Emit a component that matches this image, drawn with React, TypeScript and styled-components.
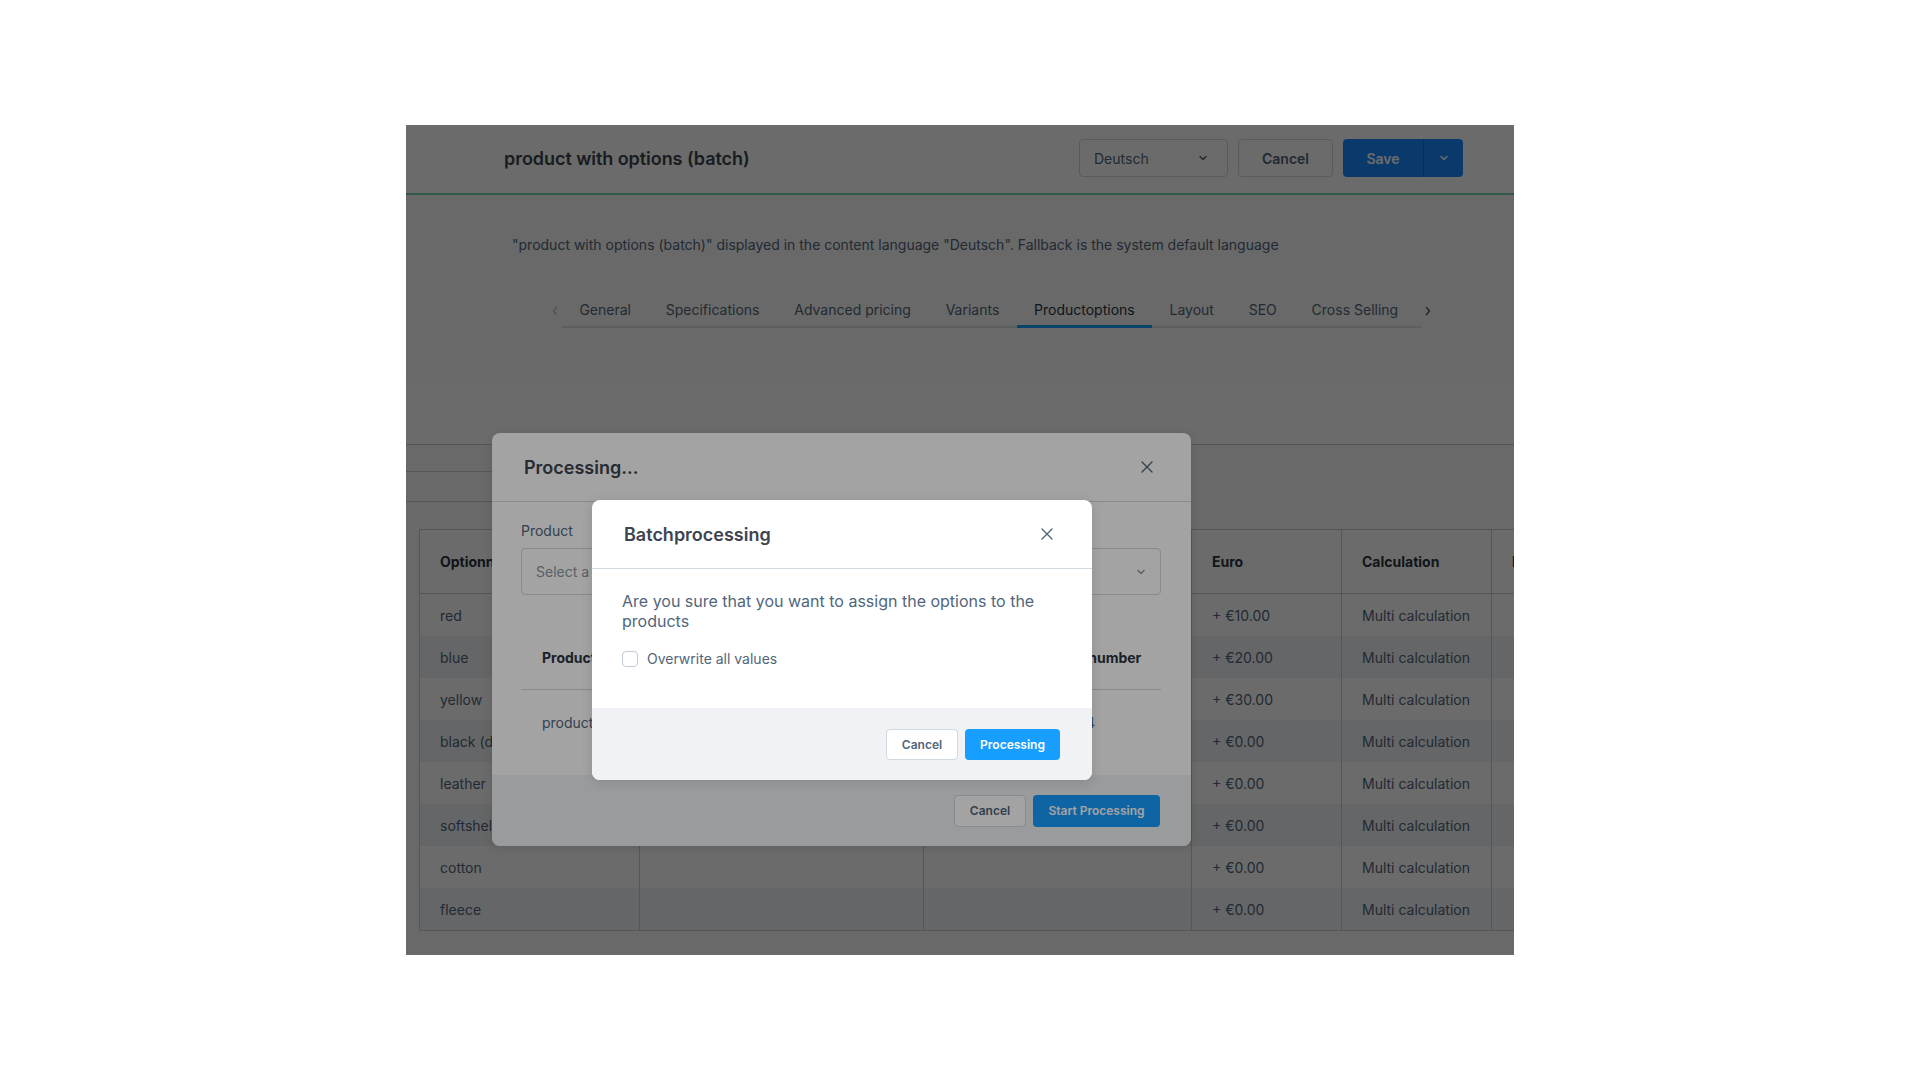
import React from "react";
import styled, { createGlobalStyle } from "styled-components";

const Global = createGlobalStyle`
  html, body { margin: 0; padding: 0; background: #ffffff; }
  body { font-family: Inter, "Noto Sans", "Liberation Sans", sans-serif; -webkit-font-smoothing: antialiased; }
  * { box-sizing: border-box; }
`;

const Page = styled.div`
  width: 1920px;
  height: 1080px;
  display: flex;
  align-items: center;
  justify-content: center;
  background: #ffffff;
`;

const Frame = styled.div`
  position: relative;
  width: 1108px;
  height: 830px;
  overflow: hidden;
  background: #fafbfb;
  display: flex;
  flex-direction: column;
`;

const Header = styled.header`
  height: 70px;
  flex: none;
  display: flex;
  align-items: center;
  padding: 0 51px 2px 98px;
  border-bottom: 2px solid #6fd8a4;
  background: #ffffff;
`;

const Title = styled.h1`
  margin: 0;
  flex: 1;
  font-size: 18px;
  font-weight: 600;
  color: #3d4450;
  letter-spacing: -0.05px;
`;

const HeaderActions = styled.div`
  display: flex;
  align-items: center;
  gap: 10px;
`;

const LangSelect = styled.div`
  width: 149px;
  height: 38px;
  border: 1px solid #d1d9e0;
  border-radius: 4px;
  display: flex;
  align-items: center;
  justify-content: space-between;
  padding: 0 19px 0 14px;
  font-size: 14px;
  color: #52667a;
  background: #ffffff;
`;

const GhostButton = styled.button<{ $w: number; $h: number; $fs: number }>`
  width: ${(p) => p.$w}px;
  height: ${(p) => p.$h}px;
  border: 1px solid #d1d9e0;
  border-radius: 4px;
  background: #ffffff;
  color: #52667a;
  font-family: inherit;
  font-size: ${(p) => p.$fs}px;
  font-weight: 600;
  padding: 0;
  display: flex;
  align-items: center;
  justify-content: center;
`;

const PrimaryButton = styled.button<{ $w: number; $h: number; $fs: number; $bg: string }>`
  width: ${(p) => p.$w}px;
  height: ${(p) => p.$h}px;
  border: none;
  border-radius: 4px;
  background: ${(p) => p.$bg};
  color: #ffffff;
  font-family: inherit;
  font-size: ${(p) => p.$fs}px;
  font-weight: 600;
  padding: 0;
  display: flex;
  align-items: center;
  justify-content: center;
`;

const SplitButton = styled.div`
  display: flex;
  height: 38px;
  border-radius: 4px;
  overflow: hidden;
  background: #1a8cff;
`;

const SplitMain = styled.div`
  width: 81px;
  display: flex;
  align-items: center;
  justify-content: center;
  color: #ffffff;
  font-size: 14px;
  font-weight: 600;
  border-right: 1px solid #1472d6;
`;

const SplitToggle = styled.div`
  width: 39px;
  display: flex;
  align-items: center;
  justify-content: center;
  color: #ffffff;
`;

const Content = styled.div`
  flex: 1;
  display: flex;
  flex-direction: column;
`;

const LangNote = styled.p`
  margin: 0;
  padding: 41px 0 0 106px;
  height: 99px;
  font-size: 14px;
  color: #52667a;
  line-height: 18px;
`;

const TabsRow = styled.div`
  display: flex;
  align-items: flex-start;
  padding-left: 142px;
  height: 89px;
`;

const TabArrow = styled.div<{ $dim?: boolean }>`
  width: 14px;
  height: 34px;
  display: flex;
  align-items: center;
  justify-content: center;
  color: ${(p) => (p.$dim ? "#b8c2cc" : "#52667a")};
`;

const TabList = styled.div`
  display: flex;
  border-bottom: 2px solid #dde3ea;
  width: 859px;
`;

const Tab = styled.div<{ $active?: boolean }>`
  height: 34px;
  padding: 0 17.4px;
  margin-bottom: -2px;
  display: flex;
  align-items: center;
  font-size: 14px;
  color: ${(p) => (p.$active ? "#2c3440" : "#52667a")};
  border-bottom: 3px solid ${(p) => (p.$active ? "#189eff" : "transparent")};
  white-space: nowrap;
`;

const Band = styled.div`
  height: 62px;
  background: #ffffff;
  border-bottom: 1px solid #c9d1d8;
`;

const ToolbarArea = styled.div`
  height: 84px;
  display: flex;
  flex-direction: column;
`;

const ToolLine = styled.div<{ $h: number }>`
  width: 200px;
  height: ${(p) => p.$h}px;
  border-bottom: 1px solid #c9d1d8;
`;

const Table = styled.div`
  margin-left: 13px;
  display: grid;
  grid-template-columns: 220px 284px 268px 150px 150px 150px;
  border-top: 1px solid #c9d1d8;
  border-left: 1px solid #c9d1d8;
  border-bottom: 1px solid #c9d1d8;
`;

const HeadCell = styled.div`
  height: 64px;
  display: flex;
  align-items: center;
  padding-left: 20px;
  font-size: 14px;
  font-weight: 700;
  color: #2c3440;
  border-right: 1px solid #c9d1d8;
  border-bottom: 1px solid #c9d1d8;
  background: #ffffff;
  white-space: nowrap;
  overflow: hidden;
`;

const Cell = styled.div<{ $striped: boolean }>`
  height: 42px;
  display: flex;
  align-items: center;
  padding-left: 20px;
  font-size: 14px;
  color: #52667a;
  border-right: 1px solid #c9d1d8;
  background: ${(p) => (p.$striped ? "#f1f3f5" : "#ffffff")};
  white-space: nowrap;
  overflow: hidden;
`;

const Backdrop = styled.div<{ $a: number }>`
  position: absolute;
  inset: 0;
  background: rgba(0, 0, 0, ${(p) => p.$a});
`;

const Modal = styled.div<{ $left: number; $top: number; $w: number; $h: number }>`
  position: absolute;
  left: ${(p) => p.$left}px;
  top: ${(p) => p.$top}px;
  width: ${(p) => p.$w}px;
  height: ${(p) => p.$h}px;
  background: #ffffff;
  border-radius: 8px;
  overflow: hidden;
  display: flex;
  flex-direction: column;
  box-shadow: 0 2px 12px rgba(0, 0, 0, 0.12);
`;

const ModalHeader = styled.div<{ $pl: number; $pr: number }>`
  height: 69px;
  flex: none;
  display: flex;
  align-items: center;
  justify-content: space-between;
  padding: 0 ${(p) => p.$pr}px 0 ${(p) => p.$pl}px;
  border-bottom: 1px solid #d1d9e0;
`;

const ModalTitle = styled.h2`
  margin: 0;
  font-size: 18px;
  font-weight: 600;
  color: #3d4450;
`;

const CloseBtn = styled.div`
  width: 14px;
  height: 14px;
  display: flex;
  align-items: center;
  justify-content: center;
  color: #52667a;
`;

const ModalBody = styled.div<{ $pad: string }>`
  flex: 1;
  padding: ${(p) => p.$pad};
  display: flex;
  flex-direction: column;
`;

const ModalFooter = styled.div<{ $h: number; $pr: number }>`
  height: ${(p) => p.$h}px;
  flex: none;
  background: #f0f2f5;
  display: flex;
  align-items: center;
  justify-content: flex-end;
  gap: 7px;
  padding-right: ${(p) => p.$pr}px;
`;

const FieldLabel = styled.div`
  font-size: 14px;
  color: #52667a;
  line-height: 18px;
  margin-bottom: 8px;
`;

const SelectBox = styled.div`
  height: 47px;
  border: 1px solid #d1d9e0;
  border-radius: 4px;
  display: flex;
  align-items: center;
  justify-content: space-between;
  padding: 0 14px 0 14px;
  font-size: 14px;
  color: #8a97a5;
`;

const InnerTable = styled.div`
  margin-top: 30px;
  display: flex;
  flex-direction: column;
`;

const InnerRow = styled.div<{ $head?: boolean }>`
  height: ${(p) => (p.$head ? "65px" : "64px")};
  display: grid;
  grid-template-columns: 489px 1fr;
  align-items: center;
  padding: 0 0 0 21px;
  font-size: 14px;
  font-weight: ${(p) => (p.$head ? 700 : 400)};
  color: ${(p) => (p.$head ? "#2c3440" : "#52667a")};
  border-bottom: ${(p) => (p.$head ? "1px solid #d1d9e0" : "none")};
  white-space: nowrap;
`;

const Question = styled.p`
  margin: 0;
  font-size: 16px;
  line-height: 20px;
  color: #52667a;
`;

const CheckRow = styled.label`
  margin-top: 19px;
  display: flex;
  align-items: center;
  gap: 9px;
  font-size: 14px;
  color: #52667a;
`;

const CheckBox = styled.span`
  width: 16px;
  height: 16px;
  border: 1px solid #c3ccd5;
  border-radius: 4px;
  background: #ffffff;
`;

const Chevron = ({ size = 10 }: { size?: number }) => (
  <svg width={size} height={size} viewBox="0 0 10 10" fill="none">
    <path d="M2 3.5L5 6.5L8 3.5" stroke="currentColor" strokeWidth="1.5" strokeLinecap="round" strokeLinejoin="round" />
  </svg>
);

const XIcon = () => (
  <svg width="12" height="12" viewBox="0 0 12 12" fill="none">
    <path d="M1 1L11 11M11 1L1 11" stroke="currentColor" strokeWidth="1.4" strokeLinecap="round" />
  </svg>
);

const ArrowL = () => (
  <svg width="8" height="10" viewBox="0 0 8 10" fill="none">
    <path d="M5.5 1.5L2.5 5L5.5 8.5" stroke="currentColor" strokeWidth="1.3" strokeLinecap="round" strokeLinejoin="round" />
  </svg>
);

const ArrowR = () => (
  <svg width="8" height="10" viewBox="0 0 8 10" fill="none">
    <path d="M2.5 1.5L5.5 5L2.5 8.5" stroke="currentColor" strokeWidth="1.6" strokeLinecap="round" strokeLinejoin="round" />
  </svg>
);

const tabs = ["General", "Specifications", "Advanced pricing", "Variants", "Productoptions", "Layout", "SEO", "Cross Selling"];

const rows = [
  { name: "red", euro: "+ €10.00" },
  { name: "blue", euro: "+ €20.00" },
  { name: "yellow", euro: "+ €30.00" },
  { name: "black (dark)", euro: "+ €0.00" },
  { name: "leather", euro: "+ €0.00" },
  { name: "softshell", euro: "+ €0.00" },
  { name: "cotton", euro: "+ €0.00" },
  { name: "fleece", euro: "+ €0.00" },
];

export default function App() {
  return (
    <>
      <Global />
      <Page>
        <Frame>
          <Header>
            <Title>product with options (batch)</Title>
            <HeaderActions>
              <LangSelect>
                <span>Deutsch</span>
                <Chevron />
              </LangSelect>
              <GhostButton $w={95} $h={38} $fs={14}>Cancel</GhostButton>
              <SplitButton>
                <SplitMain>Save</SplitMain>
                <SplitToggle>
                  <Chevron />
                </SplitToggle>
              </SplitButton>
            </HeaderActions>
          </Header>
          <Content>
            <LangNote>
              "product with options (batch)" displayed in the content language "Deutsch". Fallback is the system default language
            </LangNote>
            <TabsRow>
              <TabArrow $dim>
                <ArrowL />
              </TabArrow>
              <TabList>
                {tabs.map((t) => (
                  <Tab key={t} $active={t === "Productoptions"}>
                    {t}
                  </Tab>
                ))}
              </TabList>
              <TabArrow>
                <ArrowR />
              </TabArrow>
            </TabsRow>
            <Band />
            <ToolbarArea>
              <ToolLine $h={27} />
              <ToolLine $h={30} />
            </ToolbarArea>
            <Table>
              <HeadCell>Optionname</HeadCell>
              <HeadCell>Product number</HeadCell>
              <HeadCell>Surcharge</HeadCell>
              <HeadCell>Euro</HeadCell>
              <HeadCell>Calculation</HeadCell>
              <HeadCell>Position</HeadCell>
              {rows.map((r, i) => (
                <React.Fragment key={r.name}>
                  <Cell $striped={i % 2 === 1}>{r.name}</Cell>
                  <Cell $striped={i % 2 === 1} />
                  <Cell $striped={i % 2 === 1} />
                  <Cell $striped={i % 2 === 1}>{r.euro}</Cell>
                  <Cell $striped={i % 2 === 1}>Multi calculation</Cell>
                  <Cell $striped={i % 2 === 1} />
                </React.Fragment>
              ))}
            </Table>
          </Content>

          <Backdrop $a={0.34} />

          <Modal $left={86} $top={308} $w={699} $h={413}>
            <ModalHeader $pl={32} $pr={37}>
              <ModalTitle>Processing...</ModalTitle>
              <CloseBtn>
                <XIcon />
              </CloseBtn>
            </ModalHeader>
            <ModalBody $pad="20px 30px 0 29px">
              <FieldLabel>Product</FieldLabel>
              <SelectBox>
                <span>Select a product...</span>
                <Chevron />
              </SelectBox>
              <InnerTable>
                <InnerRow $head>
                  <span>Product name</span>
                  <span>Product number</span>
                </InnerRow>
                <InnerRow>
                  <span>product with options</span>
                  <span>SW10004</span>
                </InnerRow>
              </InnerTable>
            </ModalBody>
            <ModalFooter $h={71} $pr={31}>
              <GhostButton $w={72} $h={32} $fs={12}>Cancel</GhostButton>
              <PrimaryButton $w={127} $h={32} $fs={12} $bg="#189eff">Start Processing</PrimaryButton>
            </ModalFooter>
          </Modal>

          <Backdrop $a={0.36} />

          <Modal $left={186} $top={375} $w={500} $h={280}>
            <ModalHeader $pl={32} $pr={38}>
              <ModalTitle>Batchprocessing</ModalTitle>
              <CloseBtn>
                <XIcon />
              </CloseBtn>
            </ModalHeader>
            <ModalBody $pad="22px 30px 0 30px">
              <Question>Are you sure that you want to assign the options to the products</Question>
              <CheckRow>
                <CheckBox />
                <span>Overwrite all values</span>
              </CheckRow>
            </ModalBody>
            <ModalFooter $h={72} $pr={32}>
              <GhostButton $w={72} $h={31} $fs={12}>Cancel</GhostButton>
              <PrimaryButton $w={95} $h={31} $fs={12} $bg="#189eff">Processing</PrimaryButton>
            </ModalFooter>
          </Modal>
        </Frame>
      </Page>
    </>
  );
}
